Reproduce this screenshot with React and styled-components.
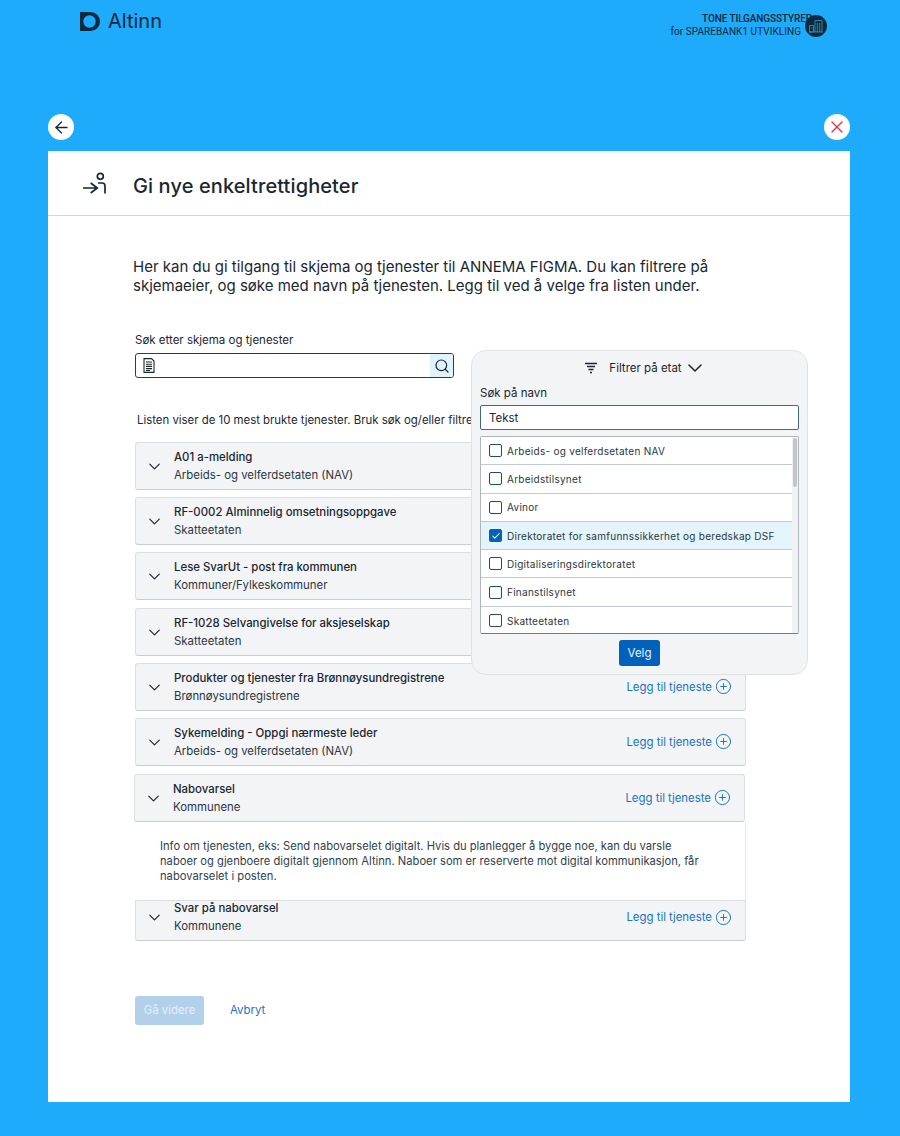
import { ArrowLeft, X, ChevronDown, Search, CirclePlus, Check } from "lucide-react";
import styled, { createGlobalStyle } from "styled-components";

const GlobalStyle = createGlobalStyle`
  body {
    margin: 0;
    background: #1eabfb;
    font-family: "Inter", "Liberation Sans", sans-serif;
    color: #1a2732;
  }
`;

const Page = styled.div`
  width: 900px;
  height: 1136px;
  overflow: hidden;
  display: flex;
  flex-direction: column;
`;

const TopBar = styled.header`
  height: 114px;
  padding: 11px 73px 0 80px;
  box-sizing: border-box;
  display: flex;
  justify-content: space-between;
  align-items: flex-start;
`;

const Brand = styled.div`
  display: flex;
  align-items: center;
  gap: 8px;
  font-size: 20px;
  font-weight: 400;
  color: #0b2a3d;
  line-height: 20px;
`;

const Account = styled.div`
  display: flex;
  align-items: center;
  margin-top: 2px;
  position: relative;
`;

const AccountText = styled.div`
  font-family: "Roboto", "Liberation Sans", sans-serif;
  font-size: 10px;
  line-height: 12.5px;
  letter-spacing: 0.05px;
  color: #0b2a3d;
  text-align: right;
  margin-right: 4px;
`;

const AccountName = styled.div`
  font-weight: 500;
  letter-spacing: -0.1px;
  margin-right: -11px;
`;

const ActionRow = styled.div`
  height: 37px;
  padding: 0 50px 0 48px;
  display: flex;
  justify-content: space-between;
  align-items: flex-start;
`;

const RoundButton = styled.button`
  width: 26px;
  height: 26px;
  padding: 0;
  border: none;
  border-radius: 50%;
  background: #fff;
  color: ${(p) => p.$color};
  display: flex;
  align-items: center;
  justify-content: center;
`;

const Panel = styled.main`
  position: relative;
  width: 802px;
  height: 951px;
  margin-left: 48px;
  background: #fff;
`;

const PanelHeader = styled.div`
  height: 65px;
  box-sizing: border-box;
  padding: 0 0 0 34px;
  border-bottom: 1px solid #cfd3d6;
  display: flex;
  align-items: center;
  gap: 26px;
`;

const Title = styled.h1`
  margin: 6px 0 0;
  font-size: 20px;
  font-weight: 450;
  letter-spacing: 0.1px;
  color: #1a2732;
`;

const Content = styled.div`
  padding: 41px 104px 0 87px;
`;

const Intro = styled.p`
  margin: 0 0 0 -2px;
  width: 600px;
  font-size: 15px;
  line-height: 19px;
  color: #1a2732;
`;

const SearchLabel = styled.label`
  display: block;
  margin-top: 37px;
  font-size: 11.5px;
  line-height: 16px;
  color: #1a2732;
`;

const SearchBox = styled.div`
  margin-top: 5px;
  width: 319px;
  height: 25px;
  box-sizing: border-box;
  border: 1px solid #1f3f5c;
  border-radius: 3px;
  display: flex;
  align-items: center;
  justify-content: space-between;
  overflow: hidden;
`;

const DocIcon = styled.span`
  display: flex;
  margin-left: 7px;
`;

const SearchButton = styled.span`
  width: 23px;
  height: 100%;
  background: #e0f3fc;
  display: flex;
  align-items: center;
  justify-content: center;
`;

const ListNote = styled.p`
  margin: 34px 0 0 2px;
  font-size: 11.4px;
  line-height: 16px;
  white-space: nowrap;
  color: #1a2732;
`;

const List = styled.div`
  margin-top: 14px;
  display: flex;
  flex-direction: column;
  gap: 7.2px;
`;

const Group = styled.div`
  display: flex;
  flex-direction: column;
  margin-top: 0.6px;
`;

const Row = styled.div`
  width: 611px;
  height: ${(p) => (p.$merged ? "41px" : "48px")};
  box-sizing: border-box;
  margin-left: ${(p) => (p.$open ? "-1px" : "0")};
  background: #f3f4f6;
  border: 1px solid #dcdfe2;
  border-bottom-color: #c9cdd1;
  border-radius: ${(p) => (p.$merged ? "0 0 3px 3px" : "3px")};
  padding: 0 13px 0 9px;
  display: flex;
  align-items: center;
`;

const RowChevron = styled.span`
  display: flex;
  margin-top: ${(p) => (p.$merged ? "-6px" : "1px")};
  color: #1a2732;
`;

const RowText = styled.div`
  margin-left: 10px;
  flex: 1;
  font-size: 11.4px;
  line-height: 18px;
  margin-top: ${(p) => (p.$merged ? "-6px" : "0")};
`;

const RowTitle = styled.div`
  font-weight: 450;
  color: #1a2732;
`;

const RowSub = styled.div`
  color: #2a3742;
`;

const AddLink = styled.span`
  display: flex;
  align-items: center;
  gap: 3px;
  margin-top: ${(p) => (p.$merged ? "-6px" : "0")};
  font-size: 11.4px;
  color: #1a73c4;
`;

const RowBody = styled.div`
  width: 611px;
  height: 78px;
  box-sizing: border-box;
  padding: 17px 40px 0 25px;
  font-size: 11.2px;
  line-height: 15px;
  color: #2e3f4e;
  border-right: 1px solid #e6e8ea;
  background: #fff;
`;

const Footer = styled.div`
  margin-top: 55px;
  display: flex;
  align-items: center;
  gap: 26px;
`;

const NextButton = styled.button`
  width: 69px;
  height: 29px;
  padding: 0;
  border: none;
  border-radius: 3px;
  background: #b2d0ea;
  color: #e4eff8;
  font-family: inherit;
  font-size: 11.4px;
`;

const CancelLink = styled.a`
  font-size: 11.4px;
  color: #1a73c4;
`;

const FilterPopup = styled.div`
  position: absolute;
  left: 423px;
  top: 199px;
  width: 337px;
  height: 325px;
  box-sizing: border-box;
  padding: 0 8px;
  background: #f3f4f6;
  border: 1px solid #e0e3e6;
  border-radius: 15px;
  display: flex;
  flex-direction: column;
`;

const FilterHead = styled.div`
  height: 33px;
  display: flex;
  align-items: center;
  justify-content: center;
  font-size: 11.5px;
  color: #1a2732;
  gap: 1px;
  padding-left: 12px;
`;

const FilterIcon = styled.span`
  display: flex;
  margin-right: 10px;
`;

const FilterLabel = styled.div`
  margin-top: 1px;
  font-size: 11.5px;
  line-height: 16px;
  color: #1a2732;
`;

const FilterInput = styled.div`
  margin-top: 4px;
  height: 25px;
  box-sizing: border-box;
  border: 1px solid #3c6a8e;
  border-radius: 2px;
  background: #fff;
  padding-left: 8px;
  font-size: 11.5px;
  line-height: 24px;
  color: #1a2732;
`;

const EtatList = styled.div`
  position: relative;
  margin-top: 6px;
  height: 198px;
  box-sizing: border-box;
  border: 1px solid #aeb6bd;
  border-bottom-color: #6f7a83;
  border-radius: 2px;
  background: #fff;
  overflow: hidden;
  padding-right: 6px;
`;

const Scrollbar = styled.span`
  position: absolute;
  top: 0;
  right: 0;
  bottom: 0;
  width: 6px;
  background: #f1f2f3;
  &::before {
    content: "";
    position: absolute;
    top: 1px;
    left: 1px;
    width: 4px;
    height: 49px;
    border-radius: 2px;
    background: #c3c6c9;
  }
`;

const EtatRow = styled.div`
  height: 28.3px;
  box-sizing: border-box;
  display: flex;
  align-items: center;
  gap: 5px;
  padding-left: 8px;
  font-size: 10px;
  letter-spacing: 0.27px;
  color: #2a3742;
  background: ${(p) => (p.$selected ? "#e3f4fb" : "#fff")};
  border-bottom: 1px solid #bfcad3;
  &:last-of-type {
    border-bottom: none;
  }
`;

const Box = styled.span`
  width: 13px;
  height: 13px;
  box-sizing: border-box;
  border: 1.5px solid ${(p) => (p.$checked ? "#0062ba" : "#1e4a73")};
  border-radius: 2px;
  background: ${(p) => (p.$checked ? "#0062ba" : "#fff")};
  color: #fff;
  display: flex;
  align-items: center;
  justify-content: center;
`;

const PickButton = styled.button`
  align-self: center;
  margin-top: 6px;
  width: 41px;
  height: 26px;
  padding: 0;
  border: none;
  border-radius: 3px;
  background: #0062ba;
  color: #e6f0f9;
  font-family: inherit;
  font-size: 11.5px;
`;

const services = [
  ["A01 a-melding", "Arbeids- og velferdsetaten (NAV)"],
  ["RF-0002 Alminnelig omsetningsoppgave", "Skatteetaten"],
  ["Lese SvarUt - post fra kommunen", "Kommuner/Fylkeskommuner"],
  ["RF-1028 Selvangivelse for aksjeselskap", "Skatteetaten"],
  ["Produkter og tjenester fra Brønnøysundregistrene", "Brønnøysundregistrene"],
  ["Sykemelding - Oppgi nærmeste leder", "Arbeids- og velferdsetaten (NAV)"],
];

const etater = [
  "Arbeids- og velferdsetaten NAV",
  "Arbeidstilsynet",
  "Avinor",
  "Direktoratet for samfunnssikkerhet og beredskap DSF",
  "Digitaliseringsdirektoratet",
  "Finanstilsynet",
  "Skatteetaten",
];

const AltinnLogo = () => (
  <svg width="20" height="19" viewBox="0 0 20 19">
    <path
      fillRule="evenodd"
      fill="#0b2a3d"
      d="M0 0h10.5a9.500 9.500 0 0 1 0 19H0V0zM9.500 3.300a6.200 6.200 0 1 0 0 12.400 6.200 6.200 0 0 0 0-12.400z"
    />
  </svg>
);

const OrgIcon = () => (
  <svg width="22" height="22" viewBox="0 0 22 22" style={{ position: "relative" }}>
    <circle cx="11" cy="11" r="11" fill="#0b2a3d" />
    <path
      d="M4.500 10.500h4v6.500h-4zM10 17V5.500h7V17M12.300 17V8M14.700 17V8M4 17h14M5.800 13h1.500"
      fill="none"
      stroke="#2f8fc0"
      strokeWidth="0.9"
    />
  </svg>
);

const HandoverIcon = () => (
  <svg width="25" height="23" viewBox="0 0 25 23" fill="none" stroke="#1a2732" strokeWidth="1.7">
    <circle cx="18.300" cy="4.300" r="3" />
    <path d="M1 16h14.300M8.700 11l6.600 5-6.600 5" />
    <path d="M16 11h4a3 3 0 0 1 3 3v7.500" />
  </svg>
);

const DocumentIcon = () => (
  <svg width="12" height="15" viewBox="0 0 12 15" fill="none" stroke="#1a2732" strokeWidth="1.100">
    <path d="M1 .6h7.500L11 3v11.400H1z" />
    <path d="M3 4h6M3 6.200h6M3 8.400h6M3 10.600h6M3 12.500h4" />
  </svg>
);

const FunnelLines = () => (
  <svg width="14" height="12" viewBox="0 0 14 12" fill="none" stroke="#1a2732" strokeWidth="1.500">
    <path d="M1 1.500h12M3 4.500h8M4.500 7.500h5M6 10.500h2" />
  </svg>
);

const AddService = ({ merged }) => (
  <AddLink $merged={merged}>
    Legg til tjeneste
    <CirclePlus size={17} strokeWidth={1.4} />
  </AddLink>
);

const App = () => (
  <Page>
    <GlobalStyle />
    <TopBar>
      <Brand>
        <AltinnLogo />
        Altinn
      </Brand>
      <Account>
        <AccountText>
          <AccountName>TONE TILGANGSSTYRER</AccountName>
          <div>for SPAREBANK1 UTVIKLING</div>
        </AccountText>
        <OrgIcon />
      </Account>
    </TopBar>
    <ActionRow>
      <RoundButton $color="#1a2732">
        <ArrowLeft size={19} strokeWidth={1.6} />
      </RoundButton>
      <RoundButton $color="#e0364c">
        <X size={20} strokeWidth={1.6} />
      </RoundButton>
    </ActionRow>
    <Panel>
      <PanelHeader>
        <HandoverIcon />
        <Title>Gi nye enkeltrettigheter</Title>
      </PanelHeader>
      <Content>
        <Intro>
          Her kan du gi tilgang til skjema og tjenester til ANNEMA FIGMA. Du kan filtrere på
          skjemaeier, og søke med navn på tjenesten. Legg til ved å velge fra listen under.
        </Intro>
        <SearchLabel>Søk etter skjema og tjenester</SearchLabel>
        <SearchBox>
          <DocIcon>
            <DocumentIcon />
          </DocIcon>
          <SearchButton>
            <Search size={16} strokeWidth={1.8} color="#1a2732" />
          </SearchButton>
        </SearchBox>
        <ListNote>Listen viser de 10 mest brukte tjenester. Bruk søk og/eller filtre</ListNote>
        <List>
          {services.map(([title, sub]) => (
            <Row key={title}>
              <RowChevron>
                <ChevronDown size={19} strokeWidth={1.5} />
              </RowChevron>
              <RowText>
                <RowTitle>{title}</RowTitle>
                <RowSub>{sub}</RowSub>
              </RowText>
              <AddService />
            </Row>
          ))}
          <Group>
            <Row $open>
              <RowChevron>
                <ChevronDown size={19} strokeWidth={1.5} />
              </RowChevron>
              <RowText>
                <RowTitle>Nabovarsel</RowTitle>
                <RowSub>Kommunene</RowSub>
              </RowText>
              <AddService />
            </Row>
            <RowBody>
              Info om tjenesten, eks: Send nabovarselet digitalt. Hvis du planlegger å bygge noe,
              kan du varsle naboer og gjenboere digitalt gjennom Altinn. Naboer som er reserverte
              mot digital kommunikasjon, får nabovarselet i posten.
            </RowBody>
            <Row $merged>
              <RowChevron $merged>
                <ChevronDown size={19} strokeWidth={1.5} />
              </RowChevron>
              <RowText $merged>
                <RowTitle>Svar på nabovarsel</RowTitle>
                <RowSub>Kommunene</RowSub>
              </RowText>
              <AddService merged />
            </Row>
          </Group>
        </List>
        <Footer>
          <NextButton>Gå videre</NextButton>
          <CancelLink>Avbryt</CancelLink>
        </Footer>
      </Content>
      <FilterPopup>
        <FilterHead>
          <FilterIcon>
            <FunnelLines />
          </FilterIcon>
          Filtrer på etat
          <ChevronDown size={24} strokeWidth={1.5} />
        </FilterHead>
        <FilterLabel>Søk på navn</FilterLabel>
        <FilterInput>Tekst</FilterInput>
        <EtatList>
          {etater.map((name, i) => (
            <EtatRow key={name} $selected={i === 3}>
              <Box $checked={i === 3}>{i === 3 && <Check size={10} strokeWidth={2.5} />}</Box>
              {name}
            </EtatRow>
          ))}
          <Scrollbar />
        </EtatList>
        <PickButton>Velg</PickButton>
      </FilterPopup>
    </Panel>
  </Page>
);

export default App;
